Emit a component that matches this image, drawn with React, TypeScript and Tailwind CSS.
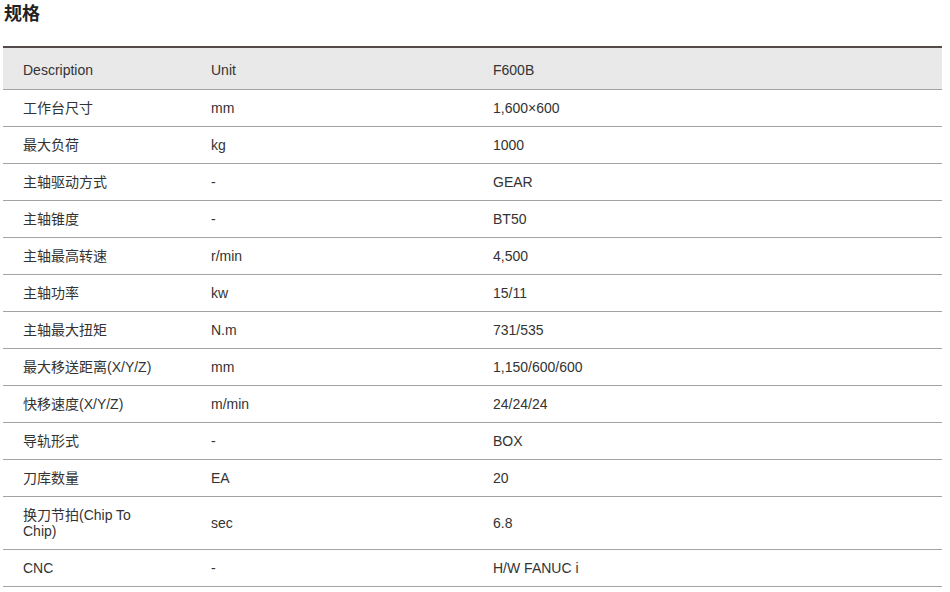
const rows: [string, string, string][] = [
  ["工作台尺寸", "mm", "1,600×600"],
  ["最大负荷", "kg", "1000"],
  ["主轴驱动方式", "-", "GEAR"],
  ["主轴锥度", "-", "BT50"],
  ["主轴最高转速", "r/min", "4,500"],
  ["主轴功率", "kw", "15/11"],
  ["主轴最大扭矩", "N.m", "731/535"],
  ["最大移送距离(X/Y/Z)", "mm", "1,150/600/600"],
  ["快移速度(X/Y/Z)", "m/min", "24/24/24"],
  ["导轨形式", "-", "BOX"],
  ["刀库数量", "EA", "20"],
  ["换刀节拍(Chip To Chip)", "sec", "6.8"],
  ["CNC", "-", "H/W FANUC i"],
];

export default function App() {
  return (
    <div className="h-[592px] w-[950px] overflow-hidden bg-white font-['Liberation_Sans','Noto_Sans_CJK_SC',sans-serif] text-[14px] leading-4 text-[#333]">
      <h2 className="pl-[4px] pt-[4px] text-[18px] font-bold leading-[20px] text-[#222]">规格</h2>
      <table className="ml-[3px] mt-[22px] w-[939px] table-fixed border-collapse border-t-2 border-[#544a4a]">
        <colgroup>
          <col className="w-[188px]" />
          <col className="w-[282px]" />
          <col />
        </colgroup>
        <thead>
          <tr className="border-b border-[#a3a3a3] bg-[#e9e9e9]">
            <th className="pb-[11px] pl-[20px] pt-[14px] text-left font-normal">Description</th>
            <th className="pl-[20px] pt-[3px] text-left font-normal">Unit</th>
            <th className="pl-[20px] pt-[3px] text-left font-normal">F600B</th>
          </tr>
        </thead>
        <tbody>
          {rows.map(([d, u, v]) => (
            <tr key={d} className="border-b border-[#a3a3a3]">
              <td className="py-[10px] pl-[20px] pr-[30px] align-middle">{d}</td>
              <td className="pl-[20px] align-middle">{u}</td>
              <td className="pl-[20px] align-middle">{v}</td>
            </tr>
          ))}
        </tbody>
      </table>
    </div>
  );
}
